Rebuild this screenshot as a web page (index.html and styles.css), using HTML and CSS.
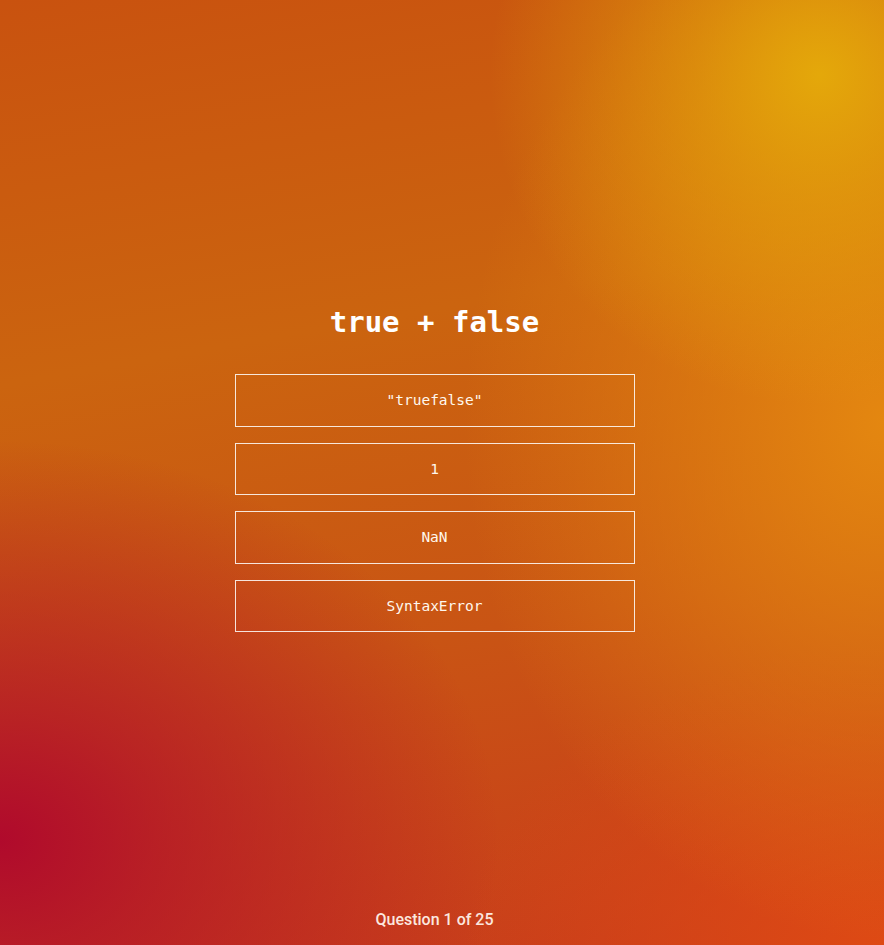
FILE: index.html
```html
<!DOCTYPE html>
<html lang="en">
<head>
<meta charset="utf-8">
<title>JS Quiz</title>
<link rel="stylesheet" href="styles.css">
</head>
<body>
<div class="page">
  <main class="quiz">
    <h1 class="question">true + false</h1>
    <div class="answers">
      <button class="answer">"truefalse"</button>
      <button class="answer">1</button>
      <button class="answer">NaN</button>
      <button class="answer">SyntaxError</button>
    </div>
  </main>
  <footer class="progress">Question 1 of 25</footer>
</div>
</body>
</html>
```
FILE: styles.css
```css
html, body {
  margin: 0;
  padding: 0;
  height: 100%;
}
body {
  background:
    radial-gradient(circle at 820px 75px, rgba(228,168,10,1) 0, rgba(228,168,10,0.6) 120px, rgba(228,168,10,0) 330px),
    radial-gradient(ellipse 500px 400px at 0 840px, rgba(176,10,44,1) 0, rgba(176,10,44,0.65) 160px, rgba(176,10,44,0) 100%),
    radial-gradient(ellipse 420px 520px at 884px 420px, rgba(228,135,16,1) 0, rgba(228,135,16,0) 100%),
    radial-gradient(ellipse 420px 300px at 884px 945px, rgba(222,74,20,1) 0, rgba(222,74,20,0) 100%),
    linear-gradient(170deg, #c9520f 0%, #cb640f 35%, #c95414 65%, #c83a1c 100%);
  font-family: "DejaVu Sans Mono", "Liberation Mono", monospace;
  color: #fff;
}
.page {
  min-height: 945px;
  display: flex;
  flex-direction: column;
  align-items: center;
  box-sizing: border-box;
  padding-top: 304px;
  padding-right: 15px;
}
.quiz {
  display: flex;
  flex-direction: column;
  align-items: center;
}
.question {
  margin: 0;
  font-size: 29px;
  line-height: 36px;
  font-weight: bold;
  color: #fff;
}
.answers {
  margin-top: 34px;
  display: flex;
  flex-direction: column;
  gap: 16px;
}
.answer {
  box-sizing: border-box;
  width: 400px;
  height: 52.6px;
  background: transparent;
  border: 1px solid rgba(255,255,255,0.85);
  color: #fff8ee;
  font-family: "DejaVu Sans Mono", "Liberation Mono", monospace;
  font-size: 14.5px;
  padding: 0;
  cursor: pointer;
}
.progress {
  margin-top: auto;
  padding-bottom: 16px;
  font-family: Roboto, "Noto Sans", sans-serif;
  font-size: 16px;
  font-weight: 500;
  line-height: 19px;
  color: #fbe7df;
}
```
